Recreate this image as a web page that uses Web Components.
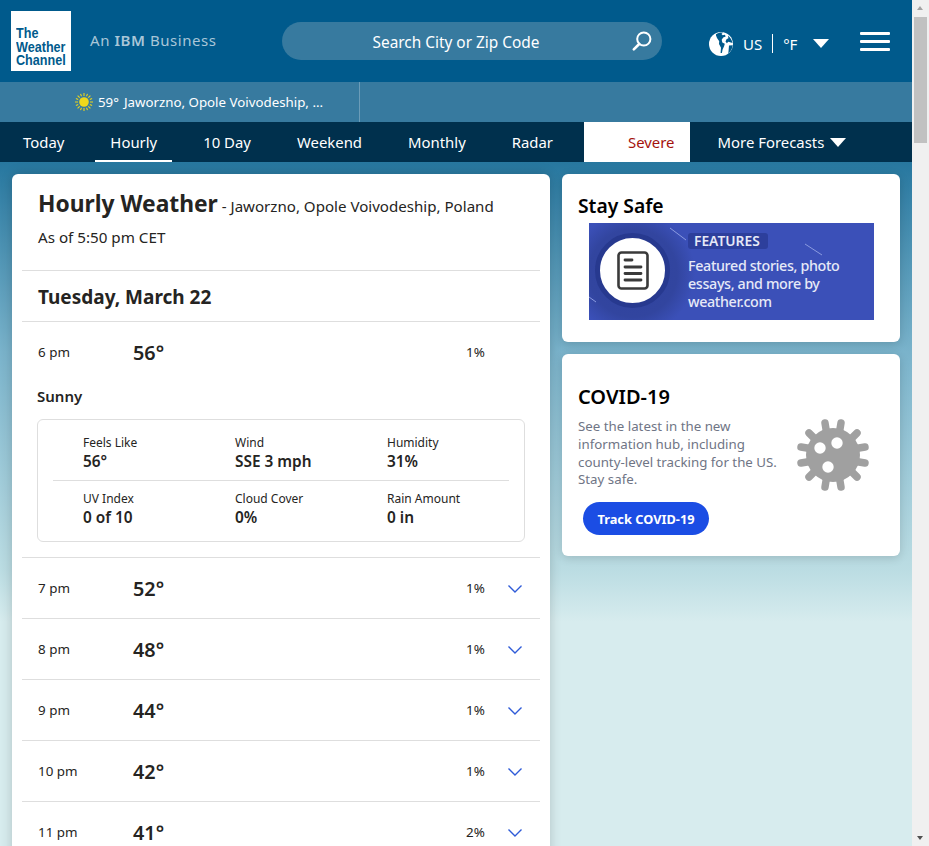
<!DOCTYPE html>
<html lang="en">
<head>
<meta charset="utf-8">
<title>Hourly Weather</title>
<style>
  html, body { margin: 0; height: 100%; overflow: hidden; }
  body { font-family: "Noto Sans", "Open Sans", sans-serif; color: #252422; }
  #page { display: flex; width: 929px; height: 846px; overflow: hidden; }
  #main { width: 912px; flex: none; display: flex; flex-direction: column; height: 846px; overflow: hidden; }
</style>
</head>
<body>
<div id="page">
  <div id="main">
    <site-header></site-header>
    <location-bar></location-bar>
    <site-nav></site-nav>
    <page-body>
      <hourly-card></hourly-card>
      <side-rail slot="side">
        <stay-safe-card></stay-safe-card>
        <covid-card></covid-card>
      </side-rail>
    </page-body>
  </div>
  <fake-scrollbar></fake-scrollbar>
</div>

<script>
const define = (name, css, html, setup) => {
  customElements.define(name, class extends HTMLElement {
    constructor() {
      super();
      this.attachShadow({ mode: "open" });
      this.shadowRoot.innerHTML = `<style>${css}</style>${html}`;
      if (setup) setup(this.shadowRoot, this);
    }
  });
};

define("site-header", `
  :host { display: flex; align-items: center; height: 82px; background: #005a8c; color: #fff; flex: none; }
  .logo { width: 60px; height: 60px; margin: 0 0 0 11px; background: #fff; color: #005a8c; box-sizing: border-box; padding: 16px 0 0 5px;
    font: bold 14px/13.5px "Liberation Sans", sans-serif; flex: none; overflow: hidden; }
  .logo div { transform: scaleX(.9); transform-origin: 0 0; white-space: nowrap; }
  .ibm { margin: 0 0 2px 19px; width: 192px; font: 15px "Noto Sans", sans-serif; letter-spacing: .55px; color: #a9c6d8; flex: none; }
  .ibm b { font-weight: 600; }
  .search { width: 380px; height: 38px; border-radius: 19px; background: #377a9f; display: flex; align-items: center; justify-content: center; position: relative; margin-top: -1px; font-size: 15.4px; flex: none; box-sizing: border-box; padding: 3px 32px 0 0; }
  .search svg { position: absolute; right: 8px; top: 7px; }
  .prefs { display: flex; align-items: center; margin: 5px 0 0 47px; font-size: 15px; flex: none; }
  .sep { width: 1px; height: 19px; background: #fff; margin: 0 10px; }
  .tri { width: 0; height: 0; border-left: 8px solid transparent; border-right: 8px solid transparent; border-top: 9px solid #fff; margin-left: 16px; }
  .burger { margin: 1px 0 0 31px; width: 30px; display: flex; flex-direction: column; gap: 5px; }
  .burger i { display: block; height: 3px; border-radius: 1px; background: #fff; }
`, `
  <div class="logo"><div>The</div><div>Weather</div><div>Channel</div></div>
  <div class="ibm">An <b>IBM</b> Business</div>
  <div class="search">Search City or Zip Code
    <svg width="24" height="24" viewBox="0 0 24 24" fill="none" stroke="#fff"><circle cx="13.8" cy="10" r="6.6" stroke-width="2"/><path d="M9.2 15 3.8 20.4" stroke-width="2.6" stroke-linecap="round"/></svg>
  </div>
  <div class="prefs">
    <svg width="24" height="24" viewBox="0 0 24 24" style="margin-right:10px"><circle cx="12" cy="12" r="12" fill="#fff"/><path d="M7 2.200C9 .8 11.500.4 14 .6l-1.500 1.400 1.200 1.300 2.200-.5.800 1.800-2.500 1-1.500 2.200.6 2.700 2.500 1.300-.7 2.400-1.500 3.200-.7 3.700-1.300-.2.400-5.200-2-3.800.2-2.700-2.200-3.300-1-2.300z" fill="#005a8c"/><path d="M19 3.500c2.400 2 4 4.800 4.600 7.500l-4.300-1.300-1.400 1.500-1.400-1.600 1-2.400 1.900-.9zM20 13.500l3.700-.2c-.4 3.400-2 6.200-4.400 8.200l.4-4.300z" fill="#005a8c"/></svg>
    <span>US</span><span class="sep"></span><span>°F</span><span class="tri"></span>
  </div>
  <div class="burger"><i></i><i></i><i></i></div>
`);

define("location-bar", `
  :host { display: flex; height: 40px; background: #377a9f; color: #fff; flex: none; font-size: 13.3px; }
  .cell { width: 360px; box-sizing: border-box; border-right: 1px solid #6b9cb8; display: flex; align-items: center; padding-left: 75px; gap: 5px; white-space: nowrap; }
`, `
  <div class="cell">
    <svg width="18" height="18" viewBox="0 0 18 18" stroke="#e9d41d" stroke-width="1.100" fill="#eed81c" style="flex:none">
      <circle cx="9" cy="9" r="4.800" stroke="none"/>
      <path d="M9 0v3M9 15v3M0 9h3M15 9h3M2.600 2.600l2.100 2.100M13.300 13.300l2.100 2.100M2.600 15.400l2.100-2.100M13.300 4.700l2.100-2.100M5.500.9l1 2.300M11.500 14.800l1 2.300M.9 12.500l2.300-1M14.800 6.500l2.300-1M12.500.9l-1 2.300M6.500 14.800l-1 2.300M.9 5.500l2.300 1M14.800 11.500l2.300 1"/>
    </svg>
    <span>59°</span><span>Jaworzno, Opole Voivodeship, ...</span>
  </div>
`);

define("site-nav", `
  :host { display: flex; height: 40px; background: #00304d; color: #fff; flex: none; padding-left: 8px; gap: 16px; font-size: 14.9px; }
  a { display: flex; align-items: center; padding: 0 15px; box-sizing: border-box; white-space: nowrap; }
  a.on { box-shadow: inset 0 -2px 0 #fff; }
  a.severe { background: #fff; color: #a4120c; padding-left: 44px; }
  a.more { padding-left: 12px; }
  .tri { width: 0; height: 0; border-left: 8px solid transparent; border-right: 8px solid transparent; border-top: 9px solid #fff; margin-left: 6px; }
`, `
  <a>Today</a><a class="on">Hourly</a><a>10 Day</a><a>Weekend</a><a>Monthly</a><a>Radar</a>
  <a class="severe">Severe</a><a class="more">More Forecasts<span class="tri"></span></a>
`);

define("page-body", `
  :host { display: flex; flex: 1; min-height: 0; gap: 12px; padding: 12px 12px 0; align-items: flex-start;
    background: linear-gradient(#27779f 0, #7ab3cb 190px, #bcdde3 410px, #d7ecee 460px, #d7ecee 100%); }
`, `<slot></slot><slot name="side"></slot>`);

define("side-rail", `
  :host { display: flex; flex-direction: column; gap: 12px; width: 338px; flex: none; }
`, `<slot></slot>`);

define("hourly-card", `
  :host { display: block; width: 538px; flex: none; background: #fff; border-radius: 6px 6px 0 0; box-shadow: 0 0 12px rgba(0,0,0,.18); padding: 0 10px; box-sizing: border-box; height: 700px; }
  header { height: 97px; padding: 15px 16px 0; box-sizing: border-box; border-bottom: 1px solid #dedede; white-space: nowrap; }
  h1 { margin: 0; font-size: 22.800px; line-height: 30px; font-weight: 700; display: inline; }
  .where { font-size: 15.100px; }
  .asof { font-size: 15.200px; line-height: 20px; margin-top: 8px; }
  h2 { margin: 0; height: 51px; box-sizing: border-box; padding: 0 16px; font-size: 19px; line-height: 52px; font-weight: 700; border-bottom: 1px solid #dedede; }
`, `
  <header>
    <h1>Hourly Weather</h1><span class="where"> - Jaworzno, Opole Voivodeship, Poland</span>
    <div class="asof">As of 5:50 pm CET</div>
  </header>
  <h2>Tuesday, March 22</h2>
  <hour-row time="6 pm" temp="56°" rain="1%" open></hour-row>
  <hour-row time="7 pm" temp="52°" rain="1%"></hour-row>
  <hour-row time="8 pm" temp="48°" rain="1%"></hour-row>
  <hour-row time="9 pm" temp="44°" rain="1%"></hour-row>
  <hour-row time="10 pm" temp="42°" rain="1%"></hour-row>
  <hour-row time="11 pm" temp="41°" rain="2%"></hour-row>
`);

define("hour-row", `
  :host { display: block; border-bottom: 1px solid #dedede; }
  .row { display: flex; align-items: center; height: 60px; padding: 0 17px 0 16px; font-size: 13.400px; }
  .time { width: 95px; }
  .temp { font-size: 19.800px; font-weight: 600; flex: 1; }
  .rain { width: 41px; }
  .chev { width: 16px; height: 10px; margin-top: 2px; }
  .detail { padding: 0 15px 15px; }
  .phrase { font-size: 15px; font-weight: 600; line-height: 20px; margin: 4px 0 13px; }
`, `<div class="row"><span class="time"></span><span class="temp"></span><span class="rain"></span>
  <svg class="chev" viewBox="0 0 16 10" fill="none" stroke="#2f5bd8" stroke-width="1.400"><path d="M1.500 1.500 8 8l6.500-6.500"/></svg></div>`,
(root, host) => {
  root.querySelector(".time").textContent = host.getAttribute("time");
  root.querySelector(".temp").textContent = host.getAttribute("temp");
  root.querySelector(".rain").textContent = host.getAttribute("rain");
  if (host.hasAttribute("open")) {
    root.querySelector(".chev").style.visibility = "hidden";
    const detail = document.createElement("div");
    detail.className = "detail";
    detail.innerHTML = `<div class="phrase">Sunny</div><detail-grid></detail-grid>`;
    root.appendChild(detail);
  }
});

define("detail-grid", `
  :host { display: block; border: 1px solid #dedede; border-radius: 6px; height: 123px; box-sizing: border-box; padding: 0 15px; }
  .line { display: grid; grid-template-columns: 152px 152px 1fr; padding: 15px 0 0 30px; height: 60px; box-sizing: border-box; }
  .line + .line { border-top: 1px solid #dedede; padding-top: 10px; }
  .k { font-size: 12px; line-height: 16px; }
  .v { font-size: 15.400px; line-height: 20px; font-weight: 600; margin-top: 1px; }
`, `
  <div class="line">
    <div><div class="k">Feels Like</div><div class="v">56°</div></div>
    <div><div class="k">Wind</div><div class="v">SSE 3 mph</div></div>
    <div><div class="k">Humidity</div><div class="v">31%</div></div>
  </div>
  <div class="line">
    <div><div class="k">UV Index</div><div class="v">0 of 10</div></div>
    <div><div class="k">Cloud Cover</div><div class="v">0%</div></div>
    <div><div class="k">Rain Amount</div><div class="v">0 in</div></div>
  </div>
`);

define("stay-safe-card", `
  :host { display: block; height: 168px; box-sizing: border-box; background: #fff; border-radius: 6px; box-shadow: 0 2px 10px rgba(0,0,0,.15); padding: 19px 16px 0; color: #000; }
  h2 { margin: 0; font-size: 19.300px; line-height: 25px; font-weight: 600; }
  .banner { width: 285px; height: 97px; margin: 5px 0 0 11px; position: relative; overflow: hidden; color: #e6e9f7; display: flex;
    background: radial-gradient(circle at 44px 50px, #2f429f 0, #32459f 44px, #3b50b8 62px); }
  .disc { width: 75px; height: 75px; margin: 10px 0 0 6px; box-sizing: border-box; border-radius: 50%; background: #fff; border: 5px solid #27398f; flex: none; display: flex; align-items: center; justify-content: center; }
  .txt { margin-left: 18px; padding-top: 10px; }
  .tag { display: block; width: fit-content; background: #2d3f9c; border-radius: 3px; padding: 0 8px 0 6px; font-size: 13.800px; font-weight: 600; line-height: 16px; }
  .copy { font-size: 14.300px; line-height: 18px; margin-top: 8px; font-weight: 500; letter-spacing: -.35px; white-space: nowrap; }
  svg.streak { position: absolute; left: 0; top: 0; }
`, `
  <h2>Stay Safe</h2>
  <div class="banner">
    <svg class="streak" width="285" height="97" fill="none" stroke="#8b9be0" stroke-width="1"><path d="M81 5l16 12M216 21l17 11M0 74l7 5"/></svg>
    <div class="disc">
      <svg width="32" height="39" viewBox="0 0 32 39" fill="none" stroke="#3a3a3a" stroke-linecap="round"><rect x="1.500" y="1.500" width="29" height="36" rx="3" stroke-width="2.600"/><path d="M8 9h7M8 16h16M8 22.500h16M8 29h16" stroke-width="2.800"/></svg>
    </div>
    <div class="txt">
      <span class="tag">FEATURES</span>
      <div class="copy">Featured stories, photo<br>essays, and more by<br>weather.com</div>
    </div>
  </div>
`);

define("covid-card", `
  :host { display: block; height: 202px; box-sizing: border-box; background: #fff; border-radius: 6px; box-shadow: 0 2px 10px rgba(0,0,0,.15); padding: 30px 16px 0; color: #000; position: relative; }
  h2 { margin: 0; font-size: 20px; line-height: 26px; font-weight: 600; }
  p { margin: 8px 0 0; width: 204px; font-size: 13.300px; line-height: 17.800px; color: #6f7585; white-space: nowrap; }
  a { display: inline-flex; align-items: center; justify-content: center; margin: 13px 0 0 5px; width: 126px; height: 33px; border-radius: 17px; background: #1b4de4; color: #fff; font-size: 12.800px; font-weight: 700; }
  svg { position: absolute; left: 234px; top: 64px; }
`, `
  <h2>COVID-19</h2>
  <p>See the latest in the new<br>information hub, including<br>county-level tracking for the US.<br>Stay safe.</p>
  <a>Track COVID-19</a>
  <svg width="74" height="74" viewBox="0 0 74 74">
    <g stroke="#a0a0a0" stroke-width="7.500" stroke-linecap="round">
      <path d="M29 5l2 12M45 5l-2 12M29 69l2-12M45 69l-2-12M5 29l12 2M5 45l12-2M69 29l-12 2M69 45l-12-2M13 15l9 9M61 15l-9 9M13 59l9-9M61 59l-9-9"/>
    </g>
    <circle cx="37" cy="37" r="27" fill="#a0a0a0"/>
    <circle cx="24" cy="30" r="5.700" fill="#fff"/><circle cx="41" cy="25" r="5.700" fill="#fff"/><circle cx="32" cy="49" r="5.700" fill="#fff"/>
  </svg>
`);

define("fake-scrollbar", `
  :host { display: flex; flex-direction: column; width: 17px; height: 846px; background: #f0f0f0; flex: none; align-items: center; position: relative; }
  .up, .down { width: 0; height: 0; border-left: 3.500px solid transparent; border-right: 3.500px solid transparent; position: absolute; left: 5px; }
  .up { top: 6px; border-bottom: 4px solid #a3a3a3; }
  .down { bottom: 6px; border-top: 4px solid #505050; }
  .thumb { position: absolute; left: 2px; top: 17px; width: 13px; height: 126px; background: #c1c1c1; }
`, `<i class="up"></i><i class="thumb"></i><i class="down"></i>`);
</script>
</body>
</html>
